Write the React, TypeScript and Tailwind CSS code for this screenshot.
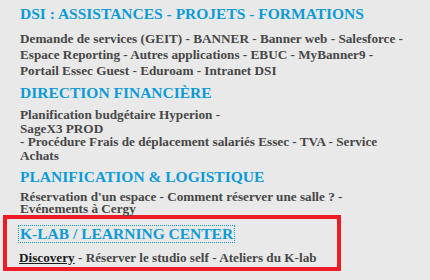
import React from "react";

const serif = { fontFamily: '"Liberation Serif", "Times New Roman", serif' };

const Sep = () => <span> - </span>;

const H = ({ children, className = "" }: { children: React.ReactNode; className?: string }) => (
  <div style={serif} className={"text-[15.5px] leading-[18px] text-[#0a9bd8] font-bold " + className}>
    {children}
  </div>
);

export default function App() {
  return (
    <div
      className="w-[430px] h-[280px] bg-[#e9e9e9] overflow-hidden text-[#474747] font-bold"
      style={serif}
    >
      <div className="pl-[20px] pt-[5px]">
        <H>DSI : ASSISTANCES - PROJETS - FORMATIONS</H>
        <div className="mt-[8px] text-[13.2px] leading-[16px]">
          <div>Demande de services (GEIT) - BANNER - Banner web - Salesforce -</div>
          <div>Espace Reporting - Autres applications - EBUC - MyBanner9 -</div>
          <div>Portail Essec Guest - Eduroam - Intranet DSI</div>
        </div>

        <H className="mt-[5px]">DIRECTION FINANCIÈRE</H>
        <div className="mt-[6px] text-[13.2px] leading-[13.5px]">
          <div>Planification budgétaire Hyperion -</div>
          <div>SageX3 PROD</div>
          <div>- Procédure Frais de déplacement salariés Essec - TVA - Service</div>
          <div>Achats</div>
        </div>

        <H className="mt-[6px]">PLANIFICATION &amp; LOGISTIQUE</H>
        <div className="mt-[5px] text-[13.2px] leading-[12px]">
          <div>Réservation d'un espace - Comment réserver une salle ? -</div>
          <div>Evénements à Cergy</div>
        </div>
      </div>

      <div className="mt-0 ml-[3px] w-[338px] h-[56px] border-[4px] border-[#ee1c25] pl-[12px] pt-[3px]">
        <div
          style={serif}
          className="inline-block outline-1 outline-dotted outline-[#0a9bd8] text-[15.5px] leading-[16px] text-[#0a9bd8] font-bold px-[1px]"
        >
          K-LAB / LEARNING CENTER
        </div>
        <div className="mt-[4px] text-[13.2px] leading-[16px] whitespace-nowrap">
          <span className="underline text-[#1a1a1a]">Discovery</span>
          <Sep />
          Réserver le studio self
          <Sep />
          Ateliers du K-lab
        </div>
      </div>
    </div>
  );
}
